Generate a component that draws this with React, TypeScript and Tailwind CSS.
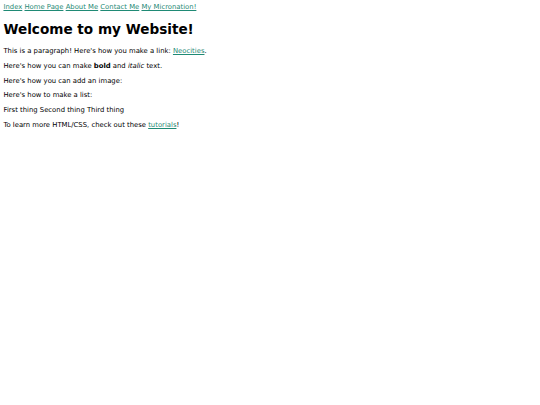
export default function App() {
    const font = { fontFamily: '"DejaVu Sans", Verdana, sans-serif' };
    const link = "text-[#1f8a75] underline";

    return (
        <div className="min-h-screen bg-white p-[3.44px] text-[6.85px] leading-[normal] text-black" style={font}>
            {/* NAV */}
            <div>
                <a className={link} href="#">Index</a>{" "}
                <a className={link} href="#">Home Page</a>{" "}
                <a className={link} href="#">About Me</a>{" "}
                <a className={link} href="#">Contact Me</a>{" "}
                <a className={link} href="#">My Micronation!</a>
            </div>

            <h1 className="mt-[9.2px] mb-[10px] text-[13.6px] font-bold leading-[normal]">Welcome to my Website!</h1>

            <p className="my-[6.95px]">
                This is a paragraph! Here's how you make a link: <a className={link} href="#">Neocities</a>.
            </p>
            <p className="my-[6.95px]">
                Here's how you can make <strong className="font-bold">bold</strong> and <em className="italic">italic</em> text.
            </p>
            <p className="my-[6.95px]">Here's how you can add an image:</p>
            <p className="my-[6.95px]">Here's how to make a list:</p>
            <p className="my-[6.95px]">First thing Second thing Third thing</p>
            <p className="my-[6.95px]">
                To learn more HTML/CSS, check out these <a className={link} href="#">tutorials</a>!
            </p>
        </div>
    );
}
